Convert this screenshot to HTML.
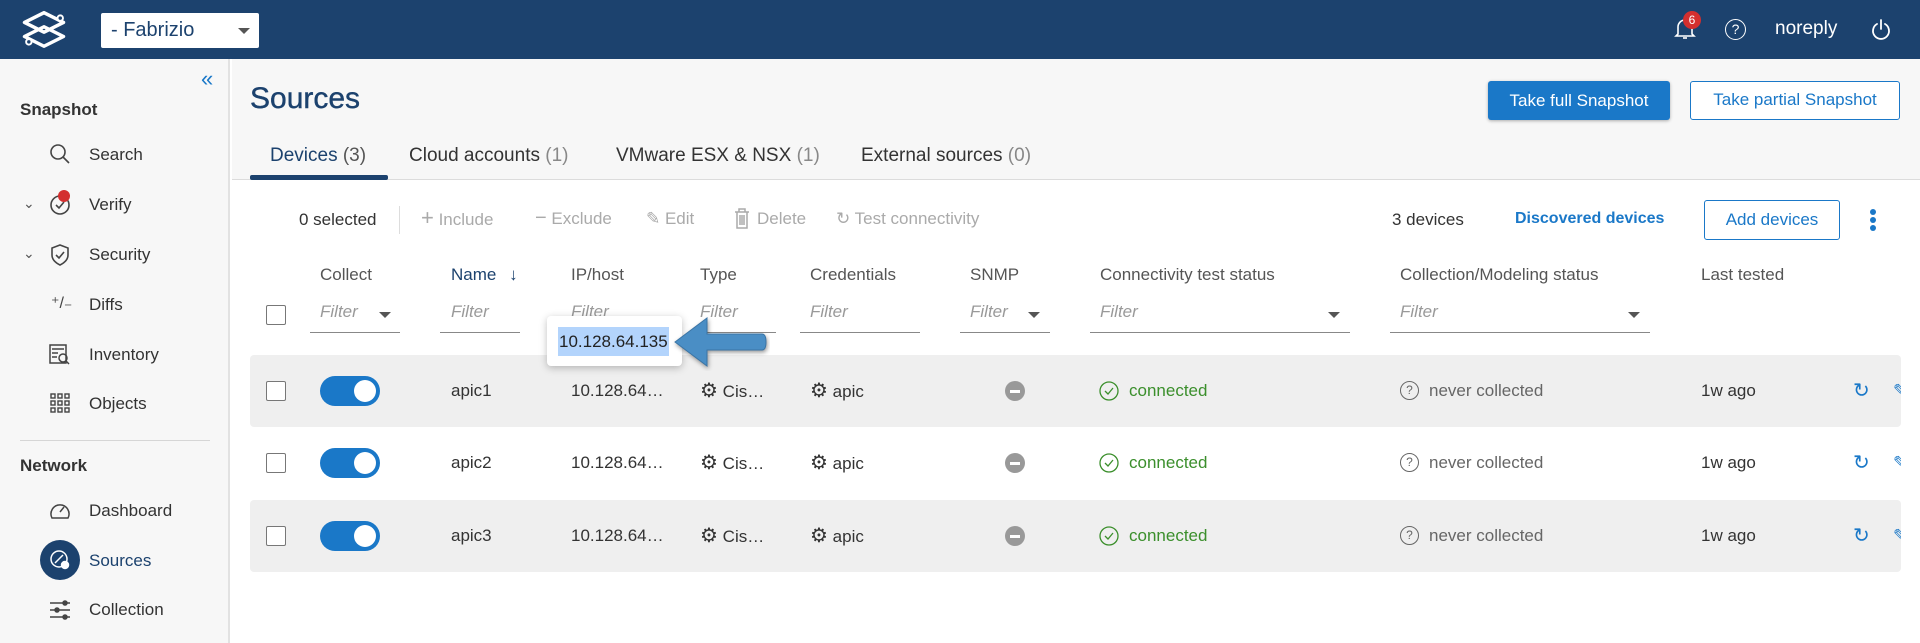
<!DOCTYPE html>
<html><head><meta charset="utf-8">
<style>
*{box-sizing:border-box;margin:0;padding:0}
body{width:1920px;height:643px;overflow:hidden;background:#fff;font-family:"Liberation Sans",sans-serif;color:#333;font-size:17px;position:relative}
.a{position:absolute;white-space:nowrap}
.hdr{left:0;top:0;width:1920px;height:59px;background:#1c426e}
.side{left:0;top:59px;width:230px;height:584px;background:#f7f7f7;border-right:2px solid #e2e2e2}
.top{left:232px;top:59px;width:1688px;height:121px;background:#f7f7f7;border-bottom:1px solid #dcdcdc}
.nav{left:89px;font-size:17px;color:#333}
.row{left:250px;width:1651px;height:72px;border-radius:4px}
.cb{width:20px;height:20px;border:1.5px solid #777;border-radius:2px;background:#fff}
.tg{width:60px;height:30px;border-radius:15px;background:#1a78c8}
.tg:after{content:"";position:absolute;right:4px;top:4px;width:22px;height:22px;border-radius:50%;background:#fff}
.th{top:265px;color:#555;font-size:17px}
.flt{top:302px;color:#999;font-style:italic;font-size:17px}
.ul{top:332px;height:1px;background:#888}
.dd{width:0;height:0;border-left:6px solid transparent;border-right:6px solid transparent;border-top:6px solid #555}
.tb{top:209px;color:#aaa;font-size:17px}
.grn{color:#3b8f2c}
.gry{color:#666}
</style></head><body>
<div class="a hdr"></div>
<svg class="a" style="left:18px;top:9px" width="52" height="42" viewBox="0 0 48 38" fill="none" stroke="#fff" stroke-width="3.2" stroke-linejoin="round">
<path d="M24 3 L42 12 L24 21 L6 12 Z"/><path d="M24 16 L42 25 L24 34 L6 25 Z"/><circle cx="39" cy="8" r="2.5" fill="#1c426e" stroke-width="1.8"/><circle cx="10" cy="30" r="2.5" fill="#1c426e" stroke-width="1.8"/></svg>
<div class="a" style="left:101px;top:13px;width:158px;height:35px;background:#fff;border-radius:2px"></div>
<div class="a" style="left:111px;top:19px;font-size:20px;color:#1c426e">- Fabrizio</div>
<div class="a dd" style="left:238px;top:28px"></div>
<svg class="a" style="left:1674px;top:17px" width="22" height="24" viewBox="0 0 22 24" fill="none" stroke="#fff" stroke-width="1.6"><path d="M4 17 V10 a7 7 0 0 1 14 0 V17 L20 19 H2 Z"/><path d="M9 21 h4"/></svg>
<div class="a" style="left:1683px;top:11px;width:18px;height:18px;border-radius:50%;background:#d32f2f;color:#fff;font-size:12px;text-align:center;line-height:18px">6</div>
<div class="a" style="left:1725px;top:19px;width:21px;height:21px;border:1.6px solid #fff;border-radius:50%;color:#fff;font-size:14px;text-align:center;line-height:18px">?</div>
<div class="a" style="left:1775px;top:18px;font-size:19px;color:#fff">noreply</div>
<svg class="a" style="left:1870px;top:17px" width="22" height="24" viewBox="0 0 22 24" fill="none" stroke="#fff" stroke-width="1.8" stroke-linecap="round"><path d="M7 7 a8 8 0 1 0 8 0"/><path d="M11 3 v9"/></svg>

<div class="a side"></div>
<div class="a" style="left:201px;top:66px;font-size:22px;color:#1a78c8">«</div>
<div class="a" style="left:20px;top:100px;font-weight:bold;font-size:17px;color:#333">Snapshot</div>
<svg class="a" style="left:49px;top:143px" width="22" height="22" fill="none" stroke="#444" stroke-width="1.6"><circle cx="9" cy="9" r="7"/><path d="M14 14 l6 6"/></svg>
<div class="a nav" style="top:145px">Search</div>
<div class="a" style="left:23px;top:195px;color:#555;font-size:14px">⌄</div>
<svg class="a" style="left:49px;top:193px" width="22" height="22" fill="none" stroke="#444" stroke-width="1.6"><circle cx="11" cy="12" r="9"/><path d="M7 12 l3 3 5-6"/></svg>
<div class="a" style="left:58px;top:190px;width:12px;height:12px;border-radius:50%;background:#d32f2f"></div>
<div class="a nav" style="top:195px">Verify</div>
<div class="a" style="left:23px;top:245px;color:#555;font-size:14px">⌄</div>
<svg class="a" style="left:50px;top:243px" width="22" height="24" fill="none" stroke="#444" stroke-width="1.6"><path d="M10 2 L18 5 V12 C18 17 14 20 10 22 C6 20 2 17 2 12 V5 Z"/><path d="M6 12 l3 3 5-6"/></svg>
<div class="a nav" style="top:245px">Security</div>
<div class="a" style="left:51px;top:293px;font-size:16px;color:#444">⁺/₋</div>
<div class="a nav" style="top:295px">Diffs</div>
<svg class="a" style="left:49px;top:344px" width="22" height="22" fill="none" stroke="#444" stroke-width="1.5"><rect x="1" y="1" width="16" height="18"/><path d="M3 5h12M3 9h6M3 13h5"/><circle cx="14" cy="14" r="4"/><path d="M17 17l3 3"/></svg>
<div class="a nav" style="top:345px">Inventory</div>
<svg class="a" style="left:50px;top:393px" width="20" height="20" fill="none" stroke="#444" stroke-width="1.4"><g><rect x="1" y="1" width="4" height="4"/><rect x="8" y="1" width="4" height="4"/><rect x="15" y="1" width="4" height="4"/><rect x="1" y="8" width="4" height="4"/><rect x="8" y="8" width="4" height="4"/><rect x="15" y="8" width="4" height="4"/><rect x="1" y="15" width="4" height="4"/><rect x="8" y="15" width="4" height="4"/><rect x="15" y="15" width="4" height="4"/></g></svg>
<div class="a nav" style="top:394px">Objects</div>
<div class="a" style="left:20px;top:440px;width:190px;height:1px;background:#d6d6d6"></div>
<div class="a" style="left:20px;top:456px;font-weight:bold;font-size:17px;color:#333">Network</div>
<svg class="a" style="left:49px;top:500px" width="22" height="22" fill="none" stroke="#444" stroke-width="1.5"><path d="M3 18 A9 9 0 1 1 19 18 Z"/><path d="M11 12 l4-5"/></svg>
<div class="a nav" style="top:501px">Dashboard</div>
<div class="a" style="left:40px;top:540px;width:40px;height:40px;border-radius:50%;background:#1c426e"></div>
<svg class="a" style="left:49px;top:549px" width="22" height="22" fill="none" stroke="#fff" stroke-width="1.5"><circle cx="10" cy="10" r="8"/><path d="M6 14 l8-8"/><circle cx="16" cy="16" r="3.5" fill="#fff"/></svg>
<div class="a nav" style="top:551px;color:#1c426e">Sources</div>
<svg class="a" style="left:49px;top:600px" width="22" height="20" fill="none" stroke="#444" stroke-width="1.5"><path d="M1 3h20M1 10h20M1 17h20"/><circle cx="16" cy="3" r="2" fill="#444"/><circle cx="8" cy="10" r="2" fill="#444"/><circle cx="16" cy="17" r="2" fill="#444"/></svg>
<div class="a nav" style="top:600px">Collection</div>

<div class="a top"></div>
<div class="a" style="left:250px;top:82px;font-size:30px;color:#1c426e;-webkit-text-stroke:0.4px #1c426e">Sources</div>
<div class="a" style="left:1488px;top:81px;width:182px;height:39px;background:#1a78c8;border-radius:3px;color:#fff;font-size:17px;text-align:center;line-height:39px;box-shadow:0 1px 3px rgba(0,0,0,.3)">Take full Snapshot</div>
<div class="a" style="left:1690px;top:81px;width:210px;height:39px;background:#fff;border:1.5px solid #1a78c8;border-radius:3px;color:#1a78c8;font-size:17px;text-align:center;line-height:36px">Take partial Snapshot</div>
<div class="a" style="left:270px;top:145px;font-size:19px;color:#1c426e">Devices <span style="color:#555">(3)</span></div>
<div class="a" style="left:250px;top:175px;width:138px;height:5px;background:#1c426e;border-radius:2px"></div>
<div class="a" style="left:409px;top:145px;font-size:19px;color:#333">Cloud accounts <span style="color:#888">(1)</span></div>
<div class="a" style="left:616px;top:145px;font-size:19px;color:#333">VMware ESX &amp; NSX <span style="color:#888">(1)</span></div>
<div class="a" style="left:861px;top:145px;font-size:19px;color:#333">External sources <span style="color:#888">(0)</span></div>

<div class="a" style="left:299px;top:210px;color:#333">0 selected</div>
<div class="a" style="left:399px;top:206px;width:1px;height:28px;background:#ddd"></div>
<div class="a tb" style="left:421px"><span style="font-size:22px;line-height:17px">+</span> Include</div>
<div class="a tb" style="left:535px"><span style="font-size:20px;line-height:17px">−</span> Exclude</div>
<div class="a tb" style="left:646px">✎ Edit</div>
<svg class="a" style="left:734px;top:208px" width="16" height="22" fill="none" stroke="#aaa" stroke-width="1.5"><path d="M1 4h14M5 4V1h6v3M3 4v16h10V4M6 7v10M8 7v10M10 7v10"/></svg>
<div class="a tb" style="left:757px">Delete</div>
<div class="a tb" style="left:836px">↻ Test connectivity</div>
<div class="a" style="left:1392px;top:210px;color:#333">3 devices</div>
<div class="a" style="left:1515px;top:210px;color:#1a78c8;font-weight:bold;font-size:16px">Discovered devices</div>
<div class="a" style="left:1704px;top:200px;width:136px;height:40px;border:1.5px solid #1a78c8;border-radius:3px;color:#1a78c8;text-align:center;line-height:37px;font-size:17px">Add devices</div>
<div class="a" style="left:1870px;top:209px;width:6px;height:6px;border-radius:50%;background:#1a78c8;box-shadow:0 8px 0 #1a78c8,0 16px 0 #1a78c8"></div>

<div class="a th" style="left:320px">Collect</div>
<div class="a th" style="left:451px;color:#1c426e">Name <span style="margin-left:8px">↓</span></div>
<div class="a th" style="left:571px">IP/host</div>
<div class="a th" style="left:700px">Type</div>
<div class="a th" style="left:810px">Credentials</div>
<div class="a th" style="left:970px">SNMP</div>
<div class="a th" style="left:1100px">Connectivity test status</div>
<div class="a th" style="left:1400px">Collection/Modeling status</div>
<div class="a th" style="left:1701px">Last tested</div>

<div class="a cb" style="left:266px;top:305px"></div>
<div class="a flt" style="left:320px">Filter</div><div class="a dd" style="left:379px;top:312px"></div><div class="a ul" style="left:310px;width:90px"></div>
<div class="a flt" style="left:451px">Filter</div><div class="a ul" style="left:440px;width:80px"></div>
<div class="a flt" style="left:571px">Filter</div><div class="a ul" style="left:560px;width:96px"></div>
<div class="a flt" style="left:700px">Filter</div><div class="a ul" style="left:700px;width:76px"></div>
<div class="a flt" style="left:810px">Filter</div><div class="a ul" style="left:800px;width:120px"></div>
<div class="a flt" style="left:970px">Filter</div><div class="a dd" style="left:1028px;top:312px"></div><div class="a ul" style="left:960px;width:90px"></div>
<div class="a flt" style="left:1100px">Filter</div><div class="a dd" style="left:1328px;top:312px"></div><div class="a ul" style="left:1090px;width:260px"></div>
<div class="a flt" style="left:1400px">Filter</div><div class="a dd" style="left:1628px;top:312px"></div><div class="a ul" style="left:1390px;width:260px"></div>

<div class="a row" style="top:355px;background:#efefef"></div>
<div class="a row" style="top:500px;background:#efefef"></div>

<div class="a cb" style="left:266px;top:381px"></div><div class="a tg" style="left:320px;top:376px"></div>
<div class="a cb" style="left:266px;top:453px"></div><div class="a tg" style="left:320px;top:448px"></div>
<div class="a cb" style="left:266px;top:526px"></div><div class="a tg" style="left:320px;top:521px"></div>

<div class="a" style="left:451px;top:381px">apic1</div>
<div class="a" style="left:451px;top:453px">apic2</div>
<div class="a" style="left:451px;top:526px">apic3</div>
<div class="a" style="left:571px;top:381px">10.128.64…</div>
<div class="a" style="left:571px;top:453px">10.128.64…</div>
<div class="a" style="left:571px;top:526px">10.128.64…</div>

<div class="a" style="left:700px;top:378px;font-size:20px">⚙<span style="font-size:17px"> Cis…</span></div>
<div class="a" style="left:700px;top:450px;font-size:20px">⚙<span style="font-size:17px"> Cis…</span></div>
<div class="a" style="left:700px;top:523px;font-size:20px">⚙<span style="font-size:17px"> Cis…</span></div>
<div class="a" style="left:810px;top:378px;font-size:20px">⚙<span style="font-size:17px"> apic</span></div>
<div class="a" style="left:810px;top:450px;font-size:20px">⚙<span style="font-size:17px"> apic</span></div>
<div class="a" style="left:810px;top:523px;font-size:20px">⚙<span style="font-size:17px"> apic</span></div>

<div class="a" style="left:1005px;top:381px;width:20px;height:20px;border-radius:50%;background:#999"><div style="margin:9px 5px;height:3px;background:#fff"></div></div>
<div class="a" style="left:1005px;top:453px;width:20px;height:20px;border-radius:50%;background:#999"><div style="margin:9px 5px;height:3px;background:#fff"></div></div>
<div class="a" style="left:1005px;top:526px;width:20px;height:20px;border-radius:50%;background:#999"><div style="margin:9px 5px;height:3px;background:#fff"></div></div>

<svg class="a" style="left:1099px;top:381px" width="20" height="20" fill="none" stroke="#3b8f2c" stroke-width="1.3"><circle cx="10" cy="10" r="9"/><path d="M6 10l3 3 5-6"/></svg>
<svg class="a" style="left:1099px;top:453px" width="20" height="20" fill="none" stroke="#3b8f2c" stroke-width="1.3"><circle cx="10" cy="10" r="9"/><path d="M6 10l3 3 5-6"/></svg>
<svg class="a" style="left:1099px;top:526px" width="20" height="20" fill="none" stroke="#3b8f2c" stroke-width="1.3"><circle cx="10" cy="10" r="9"/><path d="M6 10l3 3 5-6"/></svg>
<div class="a grn" style="left:1129px;top:381px">connected</div>
<div class="a grn" style="left:1129px;top:453px">connected</div>
<div class="a grn" style="left:1129px;top:526px">connected</div>

<div class="a" style="left:1400px;top:381px;width:19px;height:19px;border:1.3px solid #666;border-radius:50%;font-size:12px;text-align:center;line-height:17px;color:#666">?</div>
<div class="a" style="left:1400px;top:453px;width:19px;height:19px;border:1.3px solid #666;border-radius:50%;font-size:12px;text-align:center;line-height:17px;color:#666">?</div>
<div class="a" style="left:1400px;top:526px;width:19px;height:19px;border:1.3px solid #666;border-radius:50%;font-size:12px;text-align:center;line-height:17px;color:#666">?</div>
<div class="a gry" style="left:1429px;top:381px">never collected</div>
<div class="a gry" style="left:1429px;top:453px">never collected</div>
<div class="a gry" style="left:1429px;top:526px">never collected</div>

<div class="a" style="left:1701px;top:381px">1w ago</div>
<div class="a" style="left:1701px;top:453px">1w ago</div>
<div class="a" style="left:1701px;top:526px">1w ago</div>
<div class="a" style="left:1853px;top:378px;color:#1a78c8;font-size:20px">↻</div>
<div class="a" style="left:1853px;top:450px;color:#1a78c8;font-size:20px">↻</div>
<div class="a" style="left:1853px;top:523px;color:#1a78c8;font-size:20px">↻</div>
<div class="a" style="left:1893px;top:381px;color:#1a78c8;font-size:17px">✎</div>
<div class="a" style="left:1893px;top:453px;color:#1a78c8;font-size:17px">✎</div>
<div class="a" style="left:1893px;top:526px;color:#1a78c8;font-size:17px">✎</div>
<div class="a" style="left:1901px;top:340px;width:19px;height:260px;background:#fff"></div>

<div class="a" style="left:547px;top:316px;width:135px;height:50px;background:#fff;border-radius:4px;box-shadow:0 2px 8px rgba(0,0,0,.25)"></div>
<div class="a" style="left:558px;top:327px;height:29px;padding:0 1px;background:#b3d4fc;font-size:17px;line-height:29px;color:#222">10.128.64.135</div>
<svg class="a" style="left:670px;top:315px" width="100" height="56" viewBox="0 0 100 56"><g style="filter:drop-shadow(1px 2px 2px rgba(0,0,0,.4))"><path d="M5 27 L37 3 L37 19 L92 19 Q96 19 96 27 Q96 35 92 35 L37 35 L37 51 Z" fill="#4a8ec5" stroke="#3a74a5" stroke-width="1"/></g></svg>
</body></html>
